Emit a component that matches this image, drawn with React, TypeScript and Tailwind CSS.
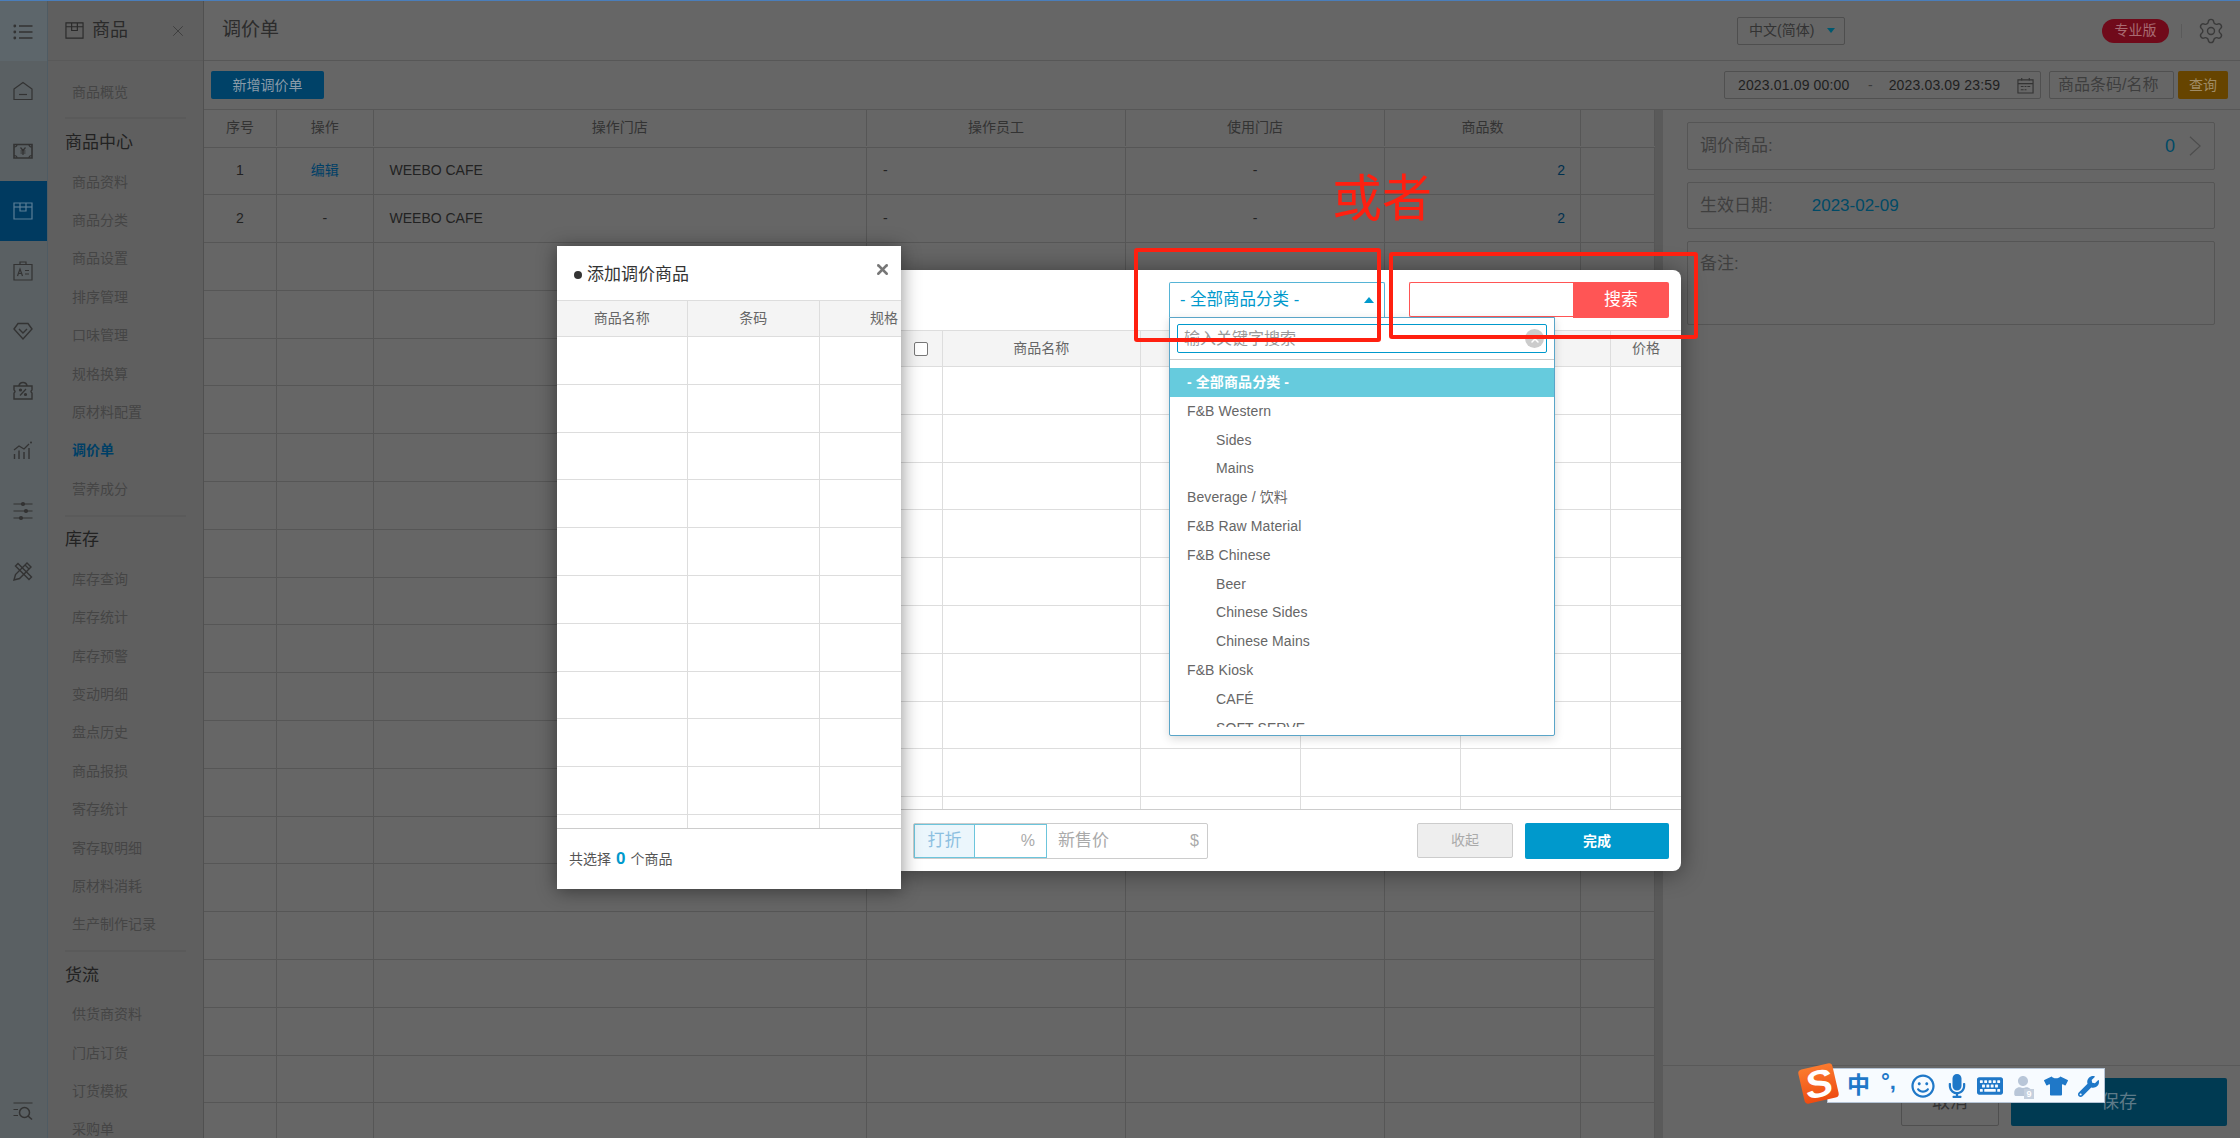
import React from "react";
import { Settings, X } from "lucide-react";
import { FaKeyboard, FaMicrophone, FaRegSmile, FaTshirt, FaUser, FaWrench } from "react-icons/fa";

const FONT = "[font-family:'Liberation_Sans','Noto_Sans_CJK_SC',sans-serif]";

const Svg = ({ children, cls = "text-[#333]" }: { children: React.ReactNode; cls?: string }) => (
  <svg viewBox="0 0 20 20" className={`h-5 w-5 ${cls}`} fill="none" stroke="currentColor" strokeWidth="1.2">
    {children}
  </svg>
);

const railIcons: React.ReactNode[] = [
  <Svg key="home">
    <path d="M1 8 L10 1.5 L19 8 V18.5 H1 Z" />
    <path d="M6 13.5 H14" />
  </Svg>,
  <Svg key="money">
    <path d="M1 3.5 H19 V17 H1 Z" strokeWidth="1.6" />
    <path d="M1 6 Q4 6 4 3.5 M19 6 Q16 6 16 3.5 M1 14.5 Q4 14.5 4 17 M19 14.5 Q16 14.5 16 17" />
    <path d="M7.5 6.5 L10 9.5 L12.5 6.5 M10 9.5 V14 M7.5 10 H12.5 M7.5 12 H12.5" />
  </Svg>,
  <Svg key="box" cls="text-[#5b7e96]">
    <path d="M1 2 H19 V18 H1 Z" />
    <path d="M1 6 H19" />
    <path d="M7 2 V10 H13 V2" />
  </Svg>,
  <Svg key="card">
    <path d="M1 3.5 H19 V19 H1 Z" />
    <path d="M7 3.5 V1 H13 V3.5" />
    <path d="M4.5 15 L7 8 L9.5 15 M5.5 12.5 H8.5 M12 9.5 H16 M12 13 H16" />
  </Svg>,
  <Svg key="diamond">
    <path d="M5 2.5 H15 L19 8 L10 18 L1 8 Z" strokeWidth="1.4" />
    <path d="M6 8 L10 12 L14 8" strokeWidth="1.4" />
  </Svg>,
  <Svg key="ticket">
    <path d="M1 5 H19 V9 Q17 10.5 19 12 V18 H1 V12 Q3 10.5 1 9 Z" strokeWidth="1.4" />
    <path d="M6 5 Q6.5 1.5 10 1.5 Q13.5 1.5 14 5" strokeWidth="1.6" />
    <path d="M7 14.5 L13 8" />
    <circle cx="7.5" cy="9" r="1" fill="currentColor" />
    <circle cx="12.5" cy="13.5" r="1" fill="currentColor" />
  </Svg>,
  <Svg key="chart">
    <path d="M1.5 18 V13 M6 18 V9.5 M11 18 V11 M16 18 V7" strokeWidth="1.4" />
    <path d="M1 9 L6 5 L11 8 L16 3" />
    <circle cx="18" cy="1.5" r="1" fill="currentColor" stroke="none" />
  </Svg>,
  <Svg key="sliders">
    <path d="M0.5 3 H19.5 M0.5 10 H19.5 M0.5 17 H19.5" />
    <circle cx="10" cy="3" r="1.5" fill="currentColor" />
    <circle cx="13" cy="10" r="1.5" fill="currentColor" />
    <circle cx="8" cy="17" r="1.5" fill="currentColor" />
  </Svg>,
  <Svg key="tools">
    <path d="M1 19 L2.5 13.5 L14 2 L18 6 L6.5 17.5 Z" strokeWidth="1.4" />
    <path d="M12 4 L16 8" />
    <path d="M2.5 5 L5 2.5 L18.5 16 L16 18.5 Z" strokeWidth="1.4" />
  </Svg>,
];

const Rail = () => (
  <div className="flex h-full w-[48px] flex-none flex-col border-r border-[#4f5b63] bg-[#5a6063]">
    <div className="flex h-[60px] flex-none items-center justify-center bg-[#5d666b] pr-[2px]">
      <svg viewBox="0 0 20 20" className="mt-[2px] h-5 w-5 text-[#333]" fill="none" stroke="currentColor" strokeWidth="1.3">
        <path d="M6 4 H19.5 M6 10 H19.5 M6 16 H19.5" />
        <circle cx="1.8" cy="4" r="1.4" fill="currentColor" stroke="none" />
        <circle cx="1.8" cy="10" r="1.4" fill="currentColor" stroke="none" />
        <circle cx="1.8" cy="16" r="1.4" fill="currentColor" stroke="none" />
      </svg>
    </div>
    {railIcons.map((icon, i) => (
      <div key={i} className={`flex h-[60px] flex-none items-center justify-center pr-[2px] ${i === 2 ? "bg-[#003a60]" : ""}`}>
        {icon}
      </div>
    ))}
    <div className="mt-auto flex h-[54px] flex-none items-center justify-center pr-[2px]">
      <Svg>
        <path d="M0.5 2 H19.5 M0.5 8.5 H5 M0.5 14.5 H5" />
        <circle cx="11.5" cy="11.5" r="5" strokeWidth="1.5" />
        <path d="M15 15 L19 18.5" strokeWidth="1.5" />
      </Svg>
    </div>
  </div>
);

const Item = ({ t, active }: { t: string; active?: boolean }) => (
  <div className={`flex h-[38.4px] items-center pl-[7px] text-[14px] ${active ? "font-bold text-[#003f66]" : "text-[#454545]"}`}>{t}</div>
);
const Heading = ({ t }: { t: string }) => <div className="flex h-[43.6px] items-center pt-[3px] text-[17px] text-[#222]">{t}</div>;

const Sidebar = () => (
  <div className="flex h-full w-[156px] flex-none flex-col overflow-hidden border-r border-[#505050] bg-[#5f5f5f]">
    <div className="flex h-[60px] flex-none items-center justify-between border-b border-[#595959] pl-[17px] pr-[16px] text-[#2a2a2a]">
      <div className="flex items-center gap-2">
        <svg viewBox="0 0 20 20" className="h-[19px] w-[19px]" fill="none" stroke="currentColor" strokeWidth="1.2">
          <path d="M1 2 H19 V18 H1 Z M1 6 H19 M7 2 V10 H13 V2" />
        </svg>
        <span className="text-[18px]">商品</span>
      </div>
      <X size={18} strokeWidth={1.3} className="text-[#3f3f3f]" />
    </div>
    <div className="flex-none pl-[17px] pr-[17px] pt-[12px]">
      <Item t="商品概览" />
      <div className="mt-[6px] border-b-2 border-[#5a5a5a]" />
      <Heading t="商品中心" />
      {["商品资料", "商品分类", "商品设置", "排序管理", "口味管理", "规格换算", "原材料配置"].map((t) => (
        <Item key={t} t={t} />
      ))}
      <Item t="调价单" active />
      <Item t="营养成分" />
      <div className="mt-[6px] border-b-2 border-[#5a5a5a]" />
      <Heading t="库存" />
      {["库存查询", "库存统计", "库存预警", "变动明细", "盘点历史", "商品报损", "寄存统计", "寄存取明细", "原材料消耗", "生产制作记录"].map((t) => (
        <Item key={t} t={t} />
      ))}
      <div className="mt-[6px] border-b-2 border-[#5a5a5a]" />
      <Heading t="货流" />
      {["供货商资料", "门店订货", "订货模板", "采购单"].map((t) => (
        <Item key={t} t={t} />
      ))}
    </div>
  </div>
);

const Header = () => (
  <div className="flex h-[60px] flex-none items-center border-b border-[#575757] pl-[18px] pr-[15px]">
    <span className="text-[19px] text-[#2c2c2c]">调价单</span>
    <div className="ml-auto flex h-[28px] w-[108px] items-center justify-between rounded-[2px] border border-[#4e4e4e] pl-[11px] pr-[9px] text-[14px] text-[#333]">
      中文(简体)
      <span className="h-0 w-0 border-x-[4px] border-t-[5px] border-x-transparent border-t-[#00586f]" />
    </div>
    <div className="ml-[257px] flex h-[24px] w-[67px] items-center justify-center rounded-full bg-[#700a1a] text-[14px] text-[#a86a72]">专业版</div>
    <div className="ml-[12px] h-[14px] w-px bg-[#5a5a5a]" />
    <Settings size={28} strokeWidth={1.2} className="ml-[15px] text-[#3a3a3a]" />
  </div>
);

const Toolbar = () => (
  <div className="flex h-[49px] flex-none items-center border-b border-[#575757] pl-[7px] pr-[12px]">
    <div className="flex h-[28px] w-[113px] items-center justify-center rounded-[2px] bg-[#004268] text-[14px] text-[#8a9ba8]">新增调价单</div>
    <div className="ml-auto flex h-[28px] w-[317px] items-center rounded-[2px] border border-[#505050] pl-[13px] text-[14px] text-[#1f1f1f]">
      <span className="w-[112px] tracking-[0.15px]">2023.01.09 00:00</span>
      <span className="ml-[18px] text-[#3a3a3a]">-</span>
      <span className="ml-[16px] w-[112px] tracking-[0.15px]">2023.03.09 23:59</span>
      <svg viewBox="0 0 18 18" className="ml-[16px] h-[17px] w-[17px] text-[#333]" fill="none" stroke="currentColor" strokeWidth="1.2">
        <path d="M1 3 H17 V17 H1 Z M1 7 H17 M5 1 V4 M13 1 V4" />
        <path d="M4 10 H7 M8 10 H10 M11 10 H14 M4 13.5 H7 M8 13.5 H10" />
      </svg>
    </div>
    <div className="ml-[8px] flex h-[28px] w-[125px] items-center rounded-[2px] border border-[#505050] pl-[8px] text-[16px] text-[#3e3e3e]">商品条码/名称</div>
    <div className="ml-[4px] flex h-[28px] w-[50px] items-center justify-center rounded-[2px] bg-[#664400] text-[14px] text-[#a08c66]">查询</div>
  </div>
);

const mainCols = "grid-cols-[73px_96.5px_493.5px_259px_259px_196px_74px]";

const MainCell = ({ children, cls = "" }: { children?: React.ReactNode; cls?: string }) => (
  <div className={`flex items-center border-r border-[#565656] text-[14px] ${cls}`}>{children}</div>
);

const MainTable = () => (
  <div className="w-[1451px] flex-none overflow-hidden">
    <div className={`grid h-[37.5px] ${mainCols} border-b border-[#565656] pb-[1px] text-[#333]`}>
      {["序号", "操作", "操作门店", "操作员工", "使用门店", "商品数", ""].map((t, i) => (
        <MainCell key={i} cls="justify-center">{t}</MainCell>
      ))}
    </div>
    {[0, 1].map((r) => (
      <div key={r} className={`grid h-[47.8px] ${mainCols} border-b border-[#565656] text-[#222]`}>
        <MainCell cls="justify-center">{r + 1}</MainCell>
        <MainCell cls={`justify-center ${r === 0 ? "text-[#003f66]" : ""}`}>{r === 0 ? "编辑" : "-"}</MainCell>
        <MainCell cls="pl-[16px]">WEEBO CAFE</MainCell>
        <MainCell cls="pl-[16px]">-</MainCell>
        <MainCell cls="justify-center">-</MainCell>
        <MainCell cls="justify-end pr-[15px] text-[#00304e]">2</MainCell>
        <MainCell />
      </div>
    ))}
    {Array.from({ length: 20 }).map((_, r) => (
      <div key={r} className={`grid h-[47.8px] ${mainCols} border-b border-[#565656]`}>
        {Array.from({ length: 7 }).map((_, c) => (
          <MainCell key={c} />
        ))}
      </div>
    ))}
  </div>
);

const Field = ({ children, cls }: { children: React.ReactNode; cls: string }) => (
  <div className={`flex rounded-[2px] border border-[#555] px-[12px] text-[17px] text-[#3f3f3f] ${cls}`}>{children}</div>
);

const RightPanel = () => (
  <div className="flex h-full min-w-0 flex-1 flex-col bg-[#666]">
    <div className="flex flex-1 flex-col gap-[12px] pl-[24px] pr-[25px] pt-[12px]">
      <Field cls="h-[48px] items-center">
        调价商品:
        <span className="ml-auto text-[18px] text-[#004a66]">0</span>
        <svg viewBox="0 0 14 22" className="ml-[14px] h-[22px] w-[13px] text-[#4d4d4d]" fill="none" stroke="currentColor" strokeWidth="1.2">
          <path d="M1 1 L12 11 L1 21" />
        </svg>
      </Field>
      <Field cls="h-[47px] items-center">
        生效日期:
        <span className="ml-[39px] text-[#004a66]">2023-02-09</span>
      </Field>
      <Field cls="h-[84px] items-start pt-[9px]">备注:</Field>
    </div>
    <div className="flex h-[73px] flex-none justify-end gap-[12px] border-t border-[#595959] pr-[13px] pt-[12px]">
      <div className="flex h-[48px] w-[98px] items-center justify-center rounded-[2px] border border-[#4f4f4f] text-[18px] text-[#333]">取消</div>
      <div className="flex h-[48px] w-[216px] items-center justify-center rounded-[2px] bg-[#003a52] text-[18px] text-[#5e7a88]">保存</div>
    </div>
  </div>
);

const GridRows = ({ cols, n, count }: { cols: string; n: number; count: number }) => (
  <>
    {Array.from({ length: count }).map((_, r) => (
      <div key={r} className={`grid h-[47.8px] flex-none ${cols} border-b border-[#ddd]`}>
        {Array.from({ length: n }).map((_, c) => (
          <div key={c} className="border-r border-[#ddd] last:border-r-0" />
        ))}
      </div>
    ))}
    <div className={`grid min-h-0 flex-1 ${cols}`}>
      {Array.from({ length: n }).map((_, c) => (
        <div key={c} className="border-r border-[#ddd] last:border-r-0" />
      ))}
    </div>
  </>
);

const backCols = "grid-cols-[44px_197.5px_160px_160px_150.5px_70px]";

const BackModal = () => (
  <div className="absolute left-[899px] top-[270px] flex h-[601px] w-[782px] flex-col rounded-r-[8px] bg-white shadow-[0_2px_24px_rgba(0,0,0,0.45)]">
    <div className="flex h-[60px] flex-none items-start justify-end pr-[12px] pt-[12px]">
      <div className="flex h-[35px] w-[164px] items-center rounded-l-[2px] border border-r-0 border-[#ff5555]" />
      <div className="flex h-[36px] w-[96px] items-center justify-center rounded-r-[2px] bg-[#ff5555] text-[17px] text-white">搜索</div>
    </div>
    <div className={`grid h-[37px] flex-none ${backCols} border-y border-[#ddd] bg-[#f4f4f4] text-[14px] text-[#666]`}>
      <div className="flex items-center justify-end border-r border-[#ddd] pr-[14px]">
        <span className="h-[14px] w-[14px] rounded-[2px] border border-[#777] bg-white" />
      </div>
      <div className="flex items-center justify-center border-r border-[#ddd]">商品名称</div>
      <div className="border-r border-[#ddd]" />
      <div className="border-r border-[#ddd]" />
      <div className="border-r border-[#ddd]" />
      <div className="flex items-center justify-center">价格</div>
    </div>
    <div className="flex h-[443px] flex-none flex-col overflow-hidden border-b border-[#ccc]">
      <GridRows cols={backCols} n={6} count={9} />
    </div>
    <div className="flex flex-1 items-start pl-[14px] pr-[12px] pt-[13px]">
      <div className="flex h-[36px] w-[295px] overflow-hidden rounded-[2px] border border-[#ccc] text-[17px] text-[#aaa]">
        <div className="flex w-[60px] items-center justify-center border border-r-0 border-[#6cc5dc] bg-[#ebf6fc] text-[#8cbfe0]">打折</div>
        <div className="flex w-[73px] items-center justify-end border border-[#6cc5dc] pr-[11px] text-[16px]">%</div>
        <div className="flex flex-1 items-center justify-between pl-[11px] pr-[8px]">
          新售价
          <span className="text-[16px]">$</span>
        </div>
      </div>
      <div className="ml-auto flex h-[35px] w-[96px] items-center justify-center rounded-[2px] border border-[#ccc] bg-[#eee] text-[14px] text-[#aaa]">收起</div>
      <div className="ml-[12px] flex h-[36px] w-[144px] items-center justify-center rounded-[2px] bg-[#0099cc] text-[14px] font-bold text-white">完成</div>
    </div>
  </div>
);

const frontCols = "grid-cols-[130.5px_132.5px_81px]";

const FrontPanel = () => (
  <div className="absolute left-[557px] top-[246px] flex h-[643px] w-[344px] flex-col overflow-hidden bg-white shadow-[0_2px_18px_rgba(0,0,0,0.45)]">
    <div className="relative flex h-[54px] flex-none items-center pl-[17px] pt-[4px] text-[17px] text-[#333]">
      <span className="mr-[5px] h-[8px] w-[8px] rounded-full bg-[#333]" />
      添加调价商品
      <span className="absolute right-[10px] top-[15px]">
        <X size={17} strokeWidth={3.5} className="text-[#777]" />
      </span>
    </div>
    <div className={`grid h-[37px] flex-none ${frontCols} border-y border-[#ddd] bg-[#f4f4f4] text-[14px] text-[#666]`}>
      <div className="flex items-center justify-center border-r border-[#ddd]">商品名称</div>
      <div className="flex items-center justify-center border-r border-[#ddd]">条码</div>
      <div className="flex items-center overflow-hidden whitespace-nowrap pl-[50px]">规格</div>
    </div>
    <div className="flex h-[492px] flex-none flex-col overflow-hidden border-b border-[#ccc]">
      <GridRows cols={frontCols} n={3} count={10} />
    </div>
    <div className="flex flex-1 items-center pl-[12px] text-[14px] text-[#555]">
      共选择
      <span className="mx-[5px] text-[17px] font-bold text-[#0099cc]">0</span>
      个商品
    </div>
  </div>
);

const options: [string, boolean][] = [
  ["F&B Western", false],
  ["Sides", true],
  ["Mains", true],
  ["Beverage / 饮料", false],
  ["F&B Raw Material", false],
  ["F&B Chinese", false],
  ["Beer", true],
  ["Chinese Sides", true],
  ["Chinese Mains", true],
  ["F&B Kiosk", false],
  ["CAFÉ", true],
  ["SOFT SERVE", true],
];

const CategoryDropdown = () => (
  <div className="absolute left-[1169px] top-[282px] w-[386px]">
    <div className="flex h-[35px] w-[216px] items-center justify-between rounded-t-[2px] border border-b-0 border-[#56b4d6] bg-white pb-[1px] pl-[10px] pr-[10px] text-[16.5px] text-[#0099cc]">
      - 全部商品分类 -
      <span className="h-0 w-0 border-x-[5px] border-b-[6px] border-x-transparent border-b-[#0099cc]" />
    </div>
    <div className="h-[419px] rounded-b-[2px] border border-[#5aa5c8] bg-white shadow-[0_3px_10px_rgba(0,0,0,0.15)]">
      <div className="px-[7px] pt-[6px]">
        <div className="relative flex h-[29px] items-center rounded-[2px] border border-[#0099cc] pl-[6px] text-[16px] text-[#999]">
          输入关键字搜索
          <span className="absolute right-[2px] top-[4px] flex h-[19px] w-[19px] items-center justify-center rounded-full bg-[#ccc]">
            <X size={12} strokeWidth={3} className="text-white" />
          </span>
        </div>
      </div>
      <div className="mt-[6px] border-t border-[#ccc]" />
      <div className="mt-[8px] h-[359px] overflow-hidden text-[14px] tracking-[0.1px] text-[#666]">
        <div className="flex h-[29px] items-center bg-[#66cbdd] pl-[17px] font-bold text-white">- 全部商品分类 -</div>
        {options.map(([t, sub]) => (
          <div key={t} className={`flex h-[28.8px] items-center whitespace-nowrap ${sub ? "pl-[46px]" : "pl-[17px]"}`}>{t}</div>
        ))}
      </div>
    </div>
  </div>
);

const Ime = () => (
  <div className="absolute left-[1797px] top-[1063px] h-[42px] w-[308px]">
    <div className="absolute left-[30px] top-[5px] flex h-[35px] w-[278px] items-center border border-[#b5c4d6] bg-[#f7fbff] text-[#1f78c8]">
      <span className="absolute left-[19px] text-[23px] font-bold leading-none">中</span>
      <span className="absolute left-[53px] top-[2px] text-[22px] font-bold leading-none">°,</span>
      <FaRegSmile size={24} className="absolute left-[83px] top-[5px]" />
      <FaMicrophone size={24} className="absolute left-[117px] top-[5px]" />
      <FaKeyboard size={26} className="absolute left-[149px] top-[4px]" />
      <FaUser size={20} className="absolute left-[185px] top-[7px] text-[#b8c6d8]" />
      <span className="absolute left-[196px] top-[20px] flex h-[10px] w-[10px] items-center justify-center bg-[#c5d0de] text-[9px] font-bold leading-none text-white">9</span>
      <FaTshirt size={24} className="absolute left-[216px] top-[5px]" />
      <FaWrench size={21} className="absolute left-[250px] top-[7px]" />
    </div>
    <div className="absolute left-[4px] top-[3px] flex h-[35px] w-[35px] -rotate-[13deg] items-center justify-center overflow-hidden rounded-[4px] bg-gradient-to-b from-[#fb7a2e] to-[#ee4b10] text-[38px] font-bold italic leading-none text-white">
      <span className="scale-x-110">S</span>
    </div>
  </div>
);

const Annotations = () => (
  <>
    <div className="absolute left-[1332px] top-[167px] text-[50px] leading-[64px] text-[#ff2010]">或者</div>
    <div className="absolute left-[1134px] top-[248px] h-[94px] w-[247px] rounded-[3px] border-4 border-[#ff2010]" />
    <div className="absolute left-[1389px] top-[252px] h-[87px] w-[309px] rounded-[3px] border-4 border-[#ff2010]" />
  </>
);

export default function App() {
  return (
    <div className={`relative h-[1138px] w-[2240px] overflow-hidden bg-[#666] ${FONT}`}>
      <div className="h-px bg-[#4a7ebb]" />
      <div className="flex h-[1137px]">
        <Rail />
        <Sidebar />
        <div className="flex min-w-0 flex-1 flex-col">
          <Header />
          <Toolbar />
          <div className="flex min-h-0 flex-1">
            <MainTable />
            <div className="w-[8px] flex-none bg-[#5a5a5a]" />
            <RightPanel />
          </div>
        </div>
      </div>
      <BackModal />
      <CategoryDropdown />
      <FrontPanel />
      <Annotations />
      <Ime />
    </div>
  );
}
